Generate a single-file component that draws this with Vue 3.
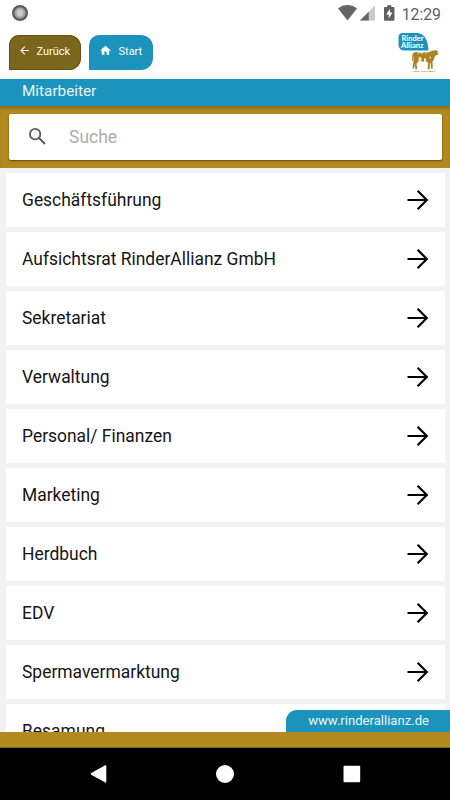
<script setup>
const departments = [
  'Geschäftsführung',
  'Aufsichtsrat RinderAllianz GmbH',
  'Sekretariat',
  'Verwaltung',
  'Personal/ Finanzen',
  'Marketing',
  'Herdbuch',
  'EDV',
  'Spermavermarktung',
  'Besamung',
]
</script>

<template>
  <div class="screen">
    <header class="status">
      <svg class="record" viewBox="0 0 16 16">
        <circle cx="8" cy="8" r="8" fill="#5b5b5b" />
        <circle cx="8" cy="8" r="5.7" fill="#a2a2a2" />
        <circle cx="8" cy="8" r="3.4" fill="#c9c9c9" />
      </svg>
      <div class="status-right">
        <svg class="wifi" viewBox="0 0 19 16"><path d="M0 3.4C5.5-1.1 13.5-1.1 19 3.4L9.5 15.6z" fill="#666" /></svg>
        <svg class="signal" viewBox="0 0 16 16"><path d="M16 0V16H0z" fill="#c9c9c9" /><path d="M9.3 6.7V16H0z" fill="#666" /></svg>
        <svg class="battery" viewBox="0 0 11 16"><path d="M3.3 0h4.4v1.600H10q1 0 1 1V15q0 1-1 1H1q-1 0-1-1V2.600q0-1 1-1h2.300z" fill="#606060" /><path d="M6.300 3.600 2.300 9.500h2.600v4.200l4-6.100H6.300z" fill="#fff" /></svg>
        <span class="clock">12:29</span>
      </div>
    </header>

    <nav class="tabs">
      <button class="tab back">
        <svg class="tab-icon" viewBox="0 0 24 24"><path d="M20 11H7.800l5.600-5.600L12 4l-8 8 8 8 1.400-1.400L7.800 13H20z" fill="#fff" /></svg>
        <span>Zurück</span>
      </button>
      <button class="tab home">
        <svg class="tab-icon" viewBox="0 0 24 24"><path d="M10 20v-6h4v6h5v-8h3L12 3 2 12h3v8z" fill="#fff" /></svg>
        <span>Start</span>
      </button>
      <svg class="logo" viewBox="0 0 44 42">
        <path d="M5 0H20C27 1 30 8 30.500 17.500H6Q1 17 .5 12V4Q.5 0 5 0z" fill="#1b93bd" />
        <text class="logo-name" x="3.500" y="7.900" textLength="22" lengthAdjust="spacingAndGlyphs">Rinder</text>
        <text class="logo-name" x="3" y="14.700" textLength="22.500" lengthAdjust="spacingAndGlyphs">Allianz</text>
        <path d="M15.500 19.800Q17 18.800 20 19.200L23 20 26 19.300H31L34.500 17.400 36 17.700 37.500 16.500 38.300 17.800 40.800 18.100 39.300 19.300 40.500 21.500 38.500 22.300 37 22.800 36 26.500 34.500 28.500 34.800 35.500H33L32.500 30 31.800 30 31.600 36.300H29.700L30 29.500 27 28.500 22.500 28.700 20 28.800 18.500 31 19.300 36.300H17.500L16.800 31 16.200 35.500H14.500L15.500 28 15.800 22 14.700 28 14 28 14.300 22z" fill="#a98224" />
        <path d="M20.500 29V25l1.500-1.500 1.500 1.500v4zM26 29v-3l1.500-1.500 1 4.500zM31 25l1.200-2 .8 3z" fill="#f1e8ce" />
        <path d="M20 19l.5 2.500M24 19v2.500M28 19v2.500" fill="none" stroke="#e6d5a7" stroke-width=".9" />
        <text class="logo-claim" x="14.500" y="39" textLength="22.500" lengthAdjust="spacingAndGlyphs">WERT UND LEBEN</text>
      </svg>
    </nav>

    <h1 class="title">Mitarbeiter</h1>

    <div class="search-band">
      <label class="search">
        <svg class="search-icon" viewBox="0 0 18 18"><circle cx="6.500" cy="6.500" r="5.500" fill="none" stroke="#5b5b5b" stroke-width="1.900" /><path d="M10.600 10.600 16.900 16.900" fill="none" stroke="#5b5b5b" stroke-width="2.100" /></svg>
        <input type="text" placeholder="Suche" />
      </label>
    </div>

    <main class="list">
      <div v-for="name in departments" :key="name" class="row">
        <span>{{ name }}</span>
        <svg class="arrow" viewBox="0 0 22 20"><path d="M.5 10H19.500M10.600.8 19.800 10 10.600 19.200" fill="none" stroke="#000" stroke-width="2.200" /></svg>
      </div>
    </main>

    <footer class="footer">
      <a class="site">www.rinderallianz.de</a>
    </footer>

    <div class="system-nav">
      <svg viewBox="0 0 20 20"><path d="M17.300 1.300 3.200 9.100q-1.200.8 0 1.600l14.100 7.900q1 .4 1-.7V2q0-1.100-1-.7z" fill="#fff" /></svg>
      <svg viewBox="0 0 20 20"><circle cx="10" cy="10" r="9" fill="#fff" /></svg>
      <svg viewBox="0 0 20 20"><rect x="1.500" y="1.700" width="16.700" height="16.500" rx="1" fill="#fff" /></svg>
    </div>
  </div>
</template>

<style>
body { margin: 0; overflow: hidden; }
</style>

<style scoped>
.screen { width: 450px; height: 800px; display: flex; flex-direction: column; overflow: hidden; background: #fff; font-family: Roboto, sans-serif; }
svg { display: block; flex: none; }
.status { height: 27px; flex: none; display: flex; justify-content: space-between; padding: 0 9px 0 12px; box-sizing: border-box; }
.record { width: 16px; height: 16px; margin-top: 5px; }
.status-right { display: flex; align-items: flex-start; padding-top: 5px; }
.wifi { width: 19px; height: 16px; margin-right: 3px; }
.signal { width: 15px; height: 16px; margin-right: 9px; }
.battery { width: 10.500px; height: 16px; margin-right: 7px; }
.clock { font-size: 15.800px; line-height: 19px; color: #5e5e5e; }
.tabs { height: 52px; flex: none; display: flex; align-items: flex-start; padding: 8px 10px 0 9px; box-sizing: border-box; }
.tab { height: 35px; box-sizing: border-box; border: 0; padding: 0 0 3px 9px; display: flex; align-items: center; color: #fff; font: 400 11px Roboto, sans-serif; border-radius: 10px 12px 12px 0; }
.tab-icon { width: 13px; height: 13px; margin-right: 5.500px; margin-bottom: 2px; }
.back { width: 72px; background: #7c651c; box-shadow: inset 0 0 0 1px #695113; margin-right: 8px; }
.home { width: 64px; background: #1b93bd; padding-left: 10px; }
.home .tab-icon { margin-right: 6.500px; }
.logo { width: 44px; height: 42px; margin: -2px -2px 0 auto; }
.logo-name { font: 700 7.300px Lato, sans-serif; fill: #fff; }
.logo-claim { font: 400 2.500px Roboto, sans-serif; fill: #8d702a; }
.title { margin: 0; height: 27px; flex: none; box-sizing: border-box; padding-left: 22px; background: #1b93bd; color: #e9f5f9; font-size: 15.300px; font-weight: 400; line-height: 25px; }
.search-band { height: 62px; flex: none; box-sizing: border-box; padding: 7.500px 8px 8px 9px; background: #b1891e; box-shadow: inset 0 4px 4px -3px #765a12; }
.search { height: 46px; border-radius: 2px; background: #fff; display: flex; align-items: center; padding: 0 0 0 20px; box-sizing: border-box; box-shadow: 0 1px 2px #5f480d; }
.search-icon { width: 17px; height: 17px; }
.search input { flex: 1; min-width: 0; margin-left: 23px; padding: 0; border: 0; outline: 0; background: transparent; font: 400 17.500px Roboto, sans-serif; }
.search input::placeholder { color: #acacac; opacity: 1; }
.list { flex: 1; min-height: 0; overflow: hidden; background: #f2f2f2; padding: 5px 5px 0 6px; display: flex; flex-direction: column; gap: 5.500px; }
.row { height: 53.500px; flex: none; box-sizing: border-box; padding: 0 16px; display: flex; align-items: center; justify-content: space-between; background: #fff; color: #151515; font-size: 17.450px; }
.arrow { width: 22px; height: 20px; }
.footer { height: 16px; flex: none; background: #b1891e; position: relative; border-bottom: 1px solid #806317; box-sizing: border-box; }
.site { position: absolute; right: 0; bottom: 15px; width: 164.500px; height: 22px; box-sizing: border-box; padding-right: 21px; text-align: right; border-top-left-radius: 11px; background: #1b93bd; color: #e9f5f9; font-size: 13.100px; line-height: 22px; }
.system-nav { height: 52px; flex: none; background: #000; display: flex; align-items: center; justify-content: center; gap: 107px; }
.system-nav svg { width: 20px; height: 20px; }
</style>
